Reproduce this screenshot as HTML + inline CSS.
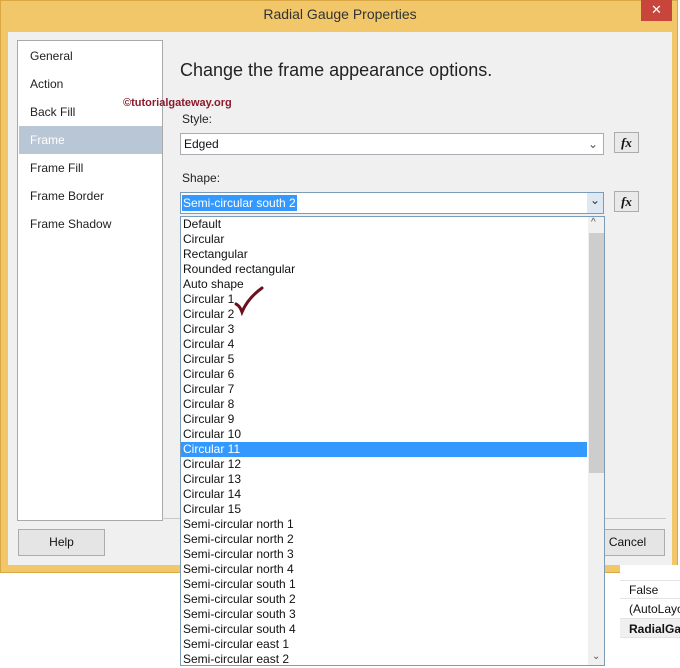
<!DOCTYPE html>
<html><head><style>
*{margin:0;padding:0;box-sizing:border-box}
body{width:680px;height:668px;overflow:hidden;background:#fff;font-family:"Liberation Sans",sans-serif;font-size:12px;color:#111;position:relative}
.abs{position:absolute}
#win{left:0;top:0;width:678px;height:573px;background:#f1c76a;border:1px solid #d9a844}
#title{left:0;top:6px;width:680px;text-align:center;font-size:14px;color:#333}
#close{left:641px;top:0;width:31px;height:21px;background:#c7453a;color:#fff;text-align:center;font-size:13px;line-height:20px}
#body{left:8px;top:32px;width:664px;height:533px;background:#f0f0f0}
#nav{left:17px;top:40px;width:146px;height:481px;background:#fff;border:1px solid #a9a9a9}
.nav{position:absolute;left:12px;font-size:12px;color:#222}
.fld{background:#fff;border:1px solid #abadb3;height:22px}
.fx{width:25px;height:21px;background:#e9e9e9;border:1px solid #acacac;font-family:"Liberation Serif",serif;font-style:italic;font-weight:bold;font-size:13px;text-align:center;line-height:19px}
.btn{background:#e5e5e5;border:1px solid #acacac;height:27px;text-align:center;line-height:25px;font-size:12px}
#list{left:180px;top:216px;width:425px;height:450px;background:#fff;border:1px solid #7a9cb8;overflow:hidden}
.it{height:15px;line-height:15px;padding-left:2px;font-size:12px;color:#111;white-space:nowrap}
.sel{background:#3399ff;color:#fff;width:406px}
</style></head><body>
<div id="win" class="abs"></div>
<div id="title" class="abs">Radial Gauge Properties</div>
<div id="close" class="abs">✕</div>
<div id="body" class="abs"></div>
<div id="nav" class="abs">
<div class="nav" style="top:8px">General</div>
<div class="nav" style="top:36px">Action</div>
<div class="nav" style="top:64px">Back Fill</div>
<div class="abs" style="left:1px;top:85px;width:143px;height:28px;background:#b9c6d5"></div>
<div class="nav" style="top:92px;color:#fff">Frame</div>
<div class="nav" style="top:120px">Frame Fill</div>
<div class="nav" style="top:148px">Frame Border</div>
<div class="nav" style="top:176px">Frame Shadow</div>
</div>
<div class="abs" style="left:180px;top:60px;font-size:18px;color:#222">Change the frame appearance options.</div>
<div class="abs" style="left:123px;top:97px;font-size:11px;font-weight:bold;color:#8b1a2a">©tutorialgateway.org</div>
<div class="abs" style="left:182px;top:112px;color:#222">Style:</div>
<div class="abs fld" style="left:180px;top:133px;width:424px"><span style="position:absolute;left:3px;top:3px">Edged</span><span style="position:absolute;right:5px;top:3px;color:#555">⌄</span></div>
<div class="abs fx" style="left:614px;top:132px">fx</div>
<div class="abs" style="left:182px;top:171px;color:#222">Shape:</div>
<div class="abs fld" style="left:180px;top:192px;width:424px;border-color:#7a9cb8"><span style="position:absolute;left:1px;top:2px;background:#3399ff;color:#fff;padding:1px 1px">Semi-circular south 2</span><span style="position:absolute;right:0;top:0;width:16px;height:20px;background:#dde8f3;text-align:center;color:#333">⌄</span></div>
<div class="abs fx" style="left:614px;top:191px">fx</div>
<div class="abs" style="left:162px;top:518px;width:504px;height:1px;background:#c8c8c8"></div>
<div class="abs btn" style="left:18px;top:529px;width:87px">Help</div>
<div class="abs btn" style="left:590px;top:529px;width:75px">Cancel</div>
<div class="abs" style="left:620px;top:565px;width:60px;height:103px;background:#fff"></div>
<div class="abs" style="left:620px;top:580px;width:60px;height:1px;background:#e3e3e3"></div>
<div class="abs" style="left:620px;top:598px;width:60px;height:1px;background:#e3e3e3"></div>
<div class="abs" style="left:620px;top:618px;width:60px;height:20px;background:#f0f0f0;border-top:1px solid #e3e3e3;border-bottom:1px solid #e3e3e3"></div>
<div class="abs" style="left:629px;top:583px">False</div>
<div class="abs" style="left:629px;top:602px;white-space:nowrap">(AutoLayout)</div>
<div class="abs" style="left:629px;top:622px;font-weight:bold;white-space:nowrap">RadialGauge</div>
<div id="list" class="abs">
<div class="it">Default</div><div class="it">Circular</div><div class="it">Rectangular</div><div class="it">Rounded rectangular</div><div class="it">Auto shape</div>
<div class="it">Circular 1</div><div class="it">Circular 2</div><div class="it">Circular 3</div><div class="it">Circular 4</div><div class="it">Circular 5</div><div class="it">Circular 6</div><div class="it">Circular 7</div><div class="it">Circular 8</div><div class="it">Circular 9</div><div class="it">Circular 10</div>
<div class="it sel">Circular 11</div><div class="it">Circular 12</div><div class="it">Circular 13</div><div class="it">Circular 14</div><div class="it">Circular 15</div>
<div class="it">Semi-circular north 1</div><div class="it">Semi-circular north 2</div><div class="it">Semi-circular north 3</div><div class="it">Semi-circular north 4</div>
<div class="it">Semi-circular south 1</div><div class="it">Semi-circular south 2</div><div class="it">Semi-circular south 3</div><div class="it">Semi-circular south 4</div>
<div class="it">Semi-circular east 1</div><div class="it">Semi-circular east 2</div>
<div class="abs" style="left:407px;top:0;width:17px;height:450px;background:#f0f0f0"></div>
<div class="abs" style="left:408px;top:16px;width:15px;height:240px;background:#cdcdcd"></div>
<div class="abs" style="left:410px;top:0;font-size:10px;color:#555">^</div>
<div class="abs" style="left:411px;top:434px;font-size:10px;color:#555">⌄</div>
</div>
<svg class="abs" style="left:232px;top:284px" width="36" height="34"><path d="M4 20 Q8 22 10 28 Q16 14 30 4" fill="none" stroke="#6b1020" stroke-width="3" stroke-linecap="round"/></svg>
</body></html>
